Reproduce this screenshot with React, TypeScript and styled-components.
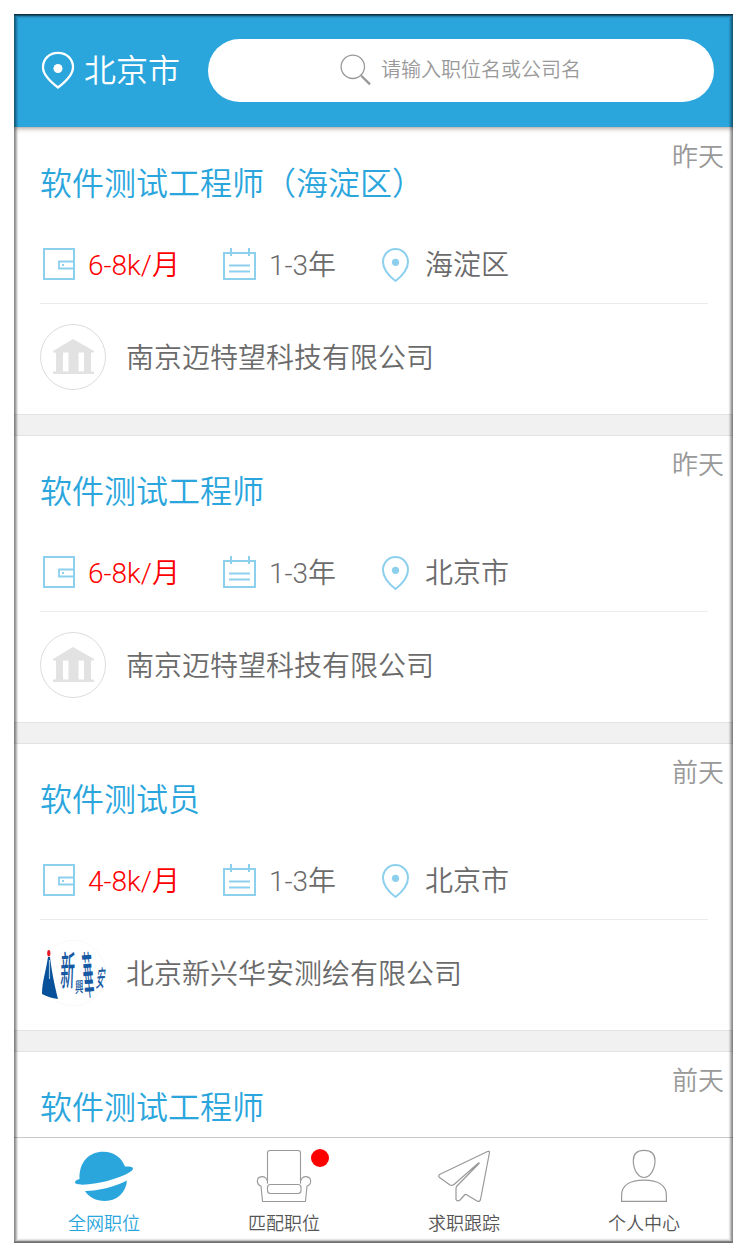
import React from 'react';
import styled, { createGlobalStyle } from 'styled-components';

const blue = '#2aa6dd';
const paleBlue = '#8dd0ee';
const gray = '#999';

const GlobalStyle = createGlobalStyle`
  * { box-sizing: border-box; }
  body {
    margin: 0;
    background: #fff;
    font-family: Roboto, "Noto Sans CJK SC", sans-serif;
    font-weight: 350;
  }
`;

const Screen = styled.div`
  position: relative;
  display: flex;
  flex-direction: column;
  width: 719px;
  height: 1229px;
  margin: 14px;
  overflow: hidden;
  background: #fff;

  &::after {
    content: '';
    position: absolute;
    inset: 0;
    z-index: 3;
    pointer-events: none;
    box-shadow:
      inset 0 1px 0 rgba(0, 0, 0, 0.3),
      inset 0 2px 0 rgba(0, 0, 0, 0.22),
      inset 0 -2px 0 rgba(0, 0, 0, 0.2),
      inset 0 0 0 1px rgba(0, 0, 0, 0.14),
      inset 0 0 0 2px rgba(0, 0, 0, 0.17),
      inset 0 0 0 3px rgba(0, 0, 0, 0.14),
      inset 0 0 0 4px rgba(0, 0, 0, 0.08),
      inset 0 0 0 5px rgba(0, 0, 0, 0.02);
  }
`;

const Header = styled.header`
  position: relative;
  z-index: 1;
  display: flex;
  align-items: center;
  flex: none;
  height: 113px;
  padding: 0 19px 0 26px;
  background: ${blue};
  box-shadow: 0 1px 5px rgba(60, 30, 20, 0.5);
`;

const City = styled.button`
  display: flex;
  align-items: center;
  gap: 8px;
  width: 168px;
  padding: 0;
  border: 0;
  background: none;
  color: #fff;
  font: inherit;
  font-size: 32px;
  line-height: 40px;
  white-space: nowrap;

  svg { margin-bottom: 2px; }
`;

const Search = styled.div`
  display: flex;
  flex: 1;
  align-items: center;
  justify-content: center;
  gap: 9px;
  height: 63px;
  padding: 0 1px 1px 0;
  border-radius: 32px;
  background: #fff;
  color: ${gray};
  font-size: 20px;
  line-height: 28px;
`;

const Jobs = styled.main`
  flex: 1;
  min-height: 0;
  overflow: hidden;
  padding-top: 1px;
`;

const Card = styled.article`
  height: 286px;
  padding: 0 25px 0 26px;
`;

const Gap = styled.div`
  height: 22px;
  border: solid #e3e3e3;
  border-width: 1px 0;
  background: #f1f1f1;
`;

const TitleRow = styled.div`
  display: flex;
  justify-content: space-between;
  height: 105px;
  margin-right: -16px;
`;

const Title = styled.h2`
  margin: 32px 0 0;
  color: ${blue};
  font-size: 32px;
  font-weight: inherit;
  line-height: 48px;
`;

const Time = styled.time`
  margin-top: 9px;
  color: ${gray};
  font-size: 26px;
  line-height: 40px;
`;

const Meta = styled.div`
  display: grid;
  grid-template-columns: 180px 159px auto;
  height: 71px;
  padding-bottom: 7px;
  border-bottom: 1px solid #ebebeb;
`;

const MetaItem = styled.div<{ $gap: number; $color?: string }>`
  display: flex;
  align-items: center;
  gap: ${(p) => p.$gap}px;
  color: ${(p) => p.$color ?? '#6b6b6b'};
  font-size: 28px;
  line-height: 40px;
  white-space: nowrap;
`;

const MetaText = styled.span`
  padding-top: 2px;
`;

const Company = styled.div`
  display: flex;
  align-items: center;
  gap: 20px;
  height: 106px;
  color: #6b6b6b;
  font-size: 28px;
`;

const CompanyName = styled.span`
  padding-bottom: 2px;
`;

const TabBar = styled.nav`
  display: flex;
  flex: none;
  height: 106px;
  border-top: 1px solid #c8c8c8;
  background: #fff;
`;

const Tab = styled.a<{ $active?: boolean }>`
  position: relative;
  display: flex;
  flex: 0 0 180px;
  flex-direction: column;
  align-items: center;
  padding-top: 10px;
  color: ${(p) => (p.$active ? blue : '#555')};
  font-size: 18px;
  line-height: 26px;

  svg { margin-bottom: 9px; }
`;

const Dot = styled.i`
  position: absolute;
  top: 11px;
  left: 117px;
  width: 18px;
  height: 18px;
  border-radius: 50%;
  background: #f00;
`;

const HeaderPin = () => (
  <svg width="36" height="40" viewBox="0 0 36 40" fill="none">
    <path d="M18 37.500C12 33 3 26 3 17.300C3 8.800 9.500 2.800 18 2.800S33 8.800 33 17.300C33 26 24 33 18 37.500Z" stroke="#fff" strokeWidth="2.300" strokeLinejoin="round" />
    <circle cx="18" cy="18.500" r="4.500" fill="#fff" />
  </svg>
);

const SearchIcon = () => (
  <svg width="32" height="32" viewBox="0 0 32 32" fill="none" stroke={gray}>
    <circle cx="12.800" cy="12.800" r="11.700" strokeWidth="1.300" />
    <path d="M20.500 21L22 22.500" strokeWidth="1.300" />
    <path d="M21.500 22L30 30.300" strokeWidth="2.400" />
  </svg>
);

const WalletIcon = () => (
  <svg width="36" height="36" viewBox="0 0 36 36" fill="none" stroke={paleBlue} strokeWidth="2">
    <path d="M4 2H34V32H4Z" />
    <path d="M34 14.500H19V21.500H34" strokeWidth="1.800" />
    <path d="M22 18H24" />
  </svg>
);

const CalendarIcon = () => (
  <svg width="38" height="36" viewBox="0 0 38 36" fill="none" stroke={paleBlue} strokeWidth="2">
    <path d="M4 6H35V32H4ZM11 1V9M29 1V9" />
    <path d="M9 18.500H30M9 24.500H30" />
  </svg>
);

const PinIcon = () => (
  <svg width="32" height="36" viewBox="0 0 32 36" fill="none">
    <path d="M16.500 34C12 30.500 4 24 4 15C4 7.500 9.500 2 16.500 2S29 7.500 29 15C29 24 21 30.500 16.500 34Z" stroke={paleBlue} strokeWidth="2" strokeLinejoin="round" />
    <circle cx="16.500" cy="15.300" r="3.600" fill={paleBlue} />
  </svg>
);

const BankLogo = () => (
  <svg width="66" height="66" viewBox="0 0 66 66">
    <circle cx="33" cy="33" r="32.500" fill="#fff" stroke="#dcdcdc" />
    <path d="M33 15L54 27V28.500H51V47.500H54V50H13V47.500H16V28.500H13V27ZM23 28.500V47.500H28.500V28.500ZM38.500 28.500V47.500H44V28.500Z" fill="#e2e2e2" fillRule="evenodd" />
  </svg>
);

const LogoGlyph = styled.text`
  fill: #1559a2;
  font-family: "Noto Sans CJK SC", sans-serif;
  font-weight: 500;
`;

const SailLogo = () => (
  <svg width="66" height="66" viewBox="0 0 66 66" overflow="visible">
    <circle cx="33" cy="33" r="32.700" fill="#fff" stroke="#f3f3f3" strokeWidth=".6" />
    <path d="M8 17H10C11.500 30 14 43 18 59C12 58.500 7 56.500 2 54C2 42 6 31 8 17Z" fill="#07509a" />
    <path d="M9.500 20V39" stroke="#9cc4e2" strokeWidth="1.200" />
    <ellipse cx="8.800" cy="13.300" rx="1.600" ry="3.300" fill="#e31927" />
    <LogoGlyph fontSize="16" transform="translate(20 46) rotate(-4) skewX(-6) scale(.9 2.500)">新</LogoGlyph>
    <LogoGlyph fontSize="9" transform="translate(35 53) rotate(-6) skewX(-6) scale(.95 1.700)">興</LogoGlyph>
    <LogoGlyph fontSize="11" transform="translate(44.500 54) rotate(-5) scale(.95 4.500)">華</LogoGlyph>
    <LogoGlyph fontSize="10" transform="translate(55.500 47) rotate(-4) skewX(-12) scale(.85 2.300)">安</LogoGlyph>
  </svg>
);

const PlanetIcon = () => (
  <svg width="60" height="54" viewBox="0 0 60 54" fill={blue}>
    <path d="M5.500 31C5 14 15 3.800 29.500 3.800C39.500 3.800 47.500 9.500 51 18.500C55 18.500 58.500 18.500 59 20.500C59.500 23 51 27.500 38 31.500C22 36.500 1.500 38.500 1 34.500C.9 32.500 3.500 31.500 5.500 31Z" />
    <path d="M11 43C25 42.500 39 39.500 53 32.500C52 44.500 43 53 31 53C22 53 14.500 49 11 43Z" />
  </svg>
);

const ChairIcon = () => (
  <svg width="60" height="54" viewBox="0 0 60 54" fill="none" stroke="#999" strokeWidth="1.100">
    <path d="M13.500 33V5Q13.500 2.500 16 2.500H44Q46.500 2.500 46.500 5V33" />
    <rect x="13.500" y="36.500" width="33.500" height="9" rx="3" />
    <path d="M13.500 36C14 31.500 11.500 28.500 8 28.700C5 28.900 3.200 31 3.300 33.800C3.500 36 4.800 37.500 7 38.500L8.500 54H51.500L53 38.500C55.500 37.500 56.700 36 56.700 33.800C56.700 31 55 28.900 52 28.700C48.500 28.500 46 31.500 46.500 36" transform="translate(0 .5) scale(1 .98)" />
  </svg>
);

const PlaneIcon = () => (
  <svg width="60" height="54" viewBox="0 0 60 54" fill="none" stroke="#999" strokeWidth="1.200" strokeLinejoin="round">
    <path d="M55.500 4.500Q55.500 2.800 53.500 3.500L5.500 26.500Q3.800 28 5.500 29.500L16 37Q18 38 20 36.500L44.500 15Q46 14.500 44.500 16L23 38Q22 39 22 41V51.500Q23.500 54 26 52L31 46.500Q32 46 33 47L43.500 53.300Q45.800 54 46.500 51.500Z" />
  </svg>
);

const PersonIcon = () => (
  <svg width="60" height="54" viewBox="0 0 60 54" fill="none" stroke="#999" strokeWidth="1.200">
    <path d="M30 2.400C37.500 2.400 41 5.500 41 12.500C41 21.500 36 29.500 30 29.500S19.300 21.500 19.300 12.500C19.300 5.500 22.500 2.400 30 2.400Z" />
    <path d="M7.600 54V48C7.600 38 16 32.800 30 32.800S52.400 38 52.400 48V54Z" transform="translate(0 -.7)" />
  </svg>
);

const jobs = [
  { title: '软件测试工程师（海淀区）', time: '昨天', pay: '6-8k/月', place: '海淀区', company: '南京迈特望科技有限公司', Logo: BankLogo },
  { title: '软件测试工程师', time: '昨天', pay: '6-8k/月', place: '北京市', company: '南京迈特望科技有限公司', Logo: BankLogo },
  { title: '软件测试员', time: '前天', pay: '4-8k/月', place: '北京市', company: '北京新兴华安测绘有限公司', Logo: SailLogo },
];

const JobHeading = ({ title, time }: { title: string; time: string }) => (
  <TitleRow>
    <Title>{title}</Title>
    <Time>{time}</Time>
  </TitleRow>
);

export default function App() {
  return (
    <>
      <GlobalStyle />
      <Screen>
        <Header>
          <City><HeaderPin />北京市</City>
          <Search><SearchIcon />请输入职位名或公司名</Search>
        </Header>
        <Jobs>
          {jobs.map(({ Logo, ...job }, i) => (
            <React.Fragment key={i}>
              <Card>
                <JobHeading title={job.title} time={job.time} />
                <Meta>
                  <MetaItem $gap={12} $color="#f00"><WalletIcon /><MetaText>{job.pay}</MetaText></MetaItem>
                  <MetaItem $gap={11}><CalendarIcon /><MetaText>1-3年</MetaText></MetaItem>
                  <MetaItem $gap={14}><PinIcon /><MetaText>{job.place}</MetaText></MetaItem>
                </Meta>
                <Company><Logo /><CompanyName>{job.company}</CompanyName></Company>
              </Card>
              <Gap />
            </React.Fragment>
          ))}
          <Card>
            <JobHeading title="软件测试工程师" time="前天" />
          </Card>
        </Jobs>
        <TabBar>
          <Tab $active><PlanetIcon />全网职位</Tab>
          <Tab><ChairIcon />匹配职位<Dot /></Tab>
          <Tab><PlaneIcon />求职跟踪</Tab>
          <Tab><PersonIcon />个人中心</Tab>
        </TabBar>
      </Screen>
    </>
  );
}
